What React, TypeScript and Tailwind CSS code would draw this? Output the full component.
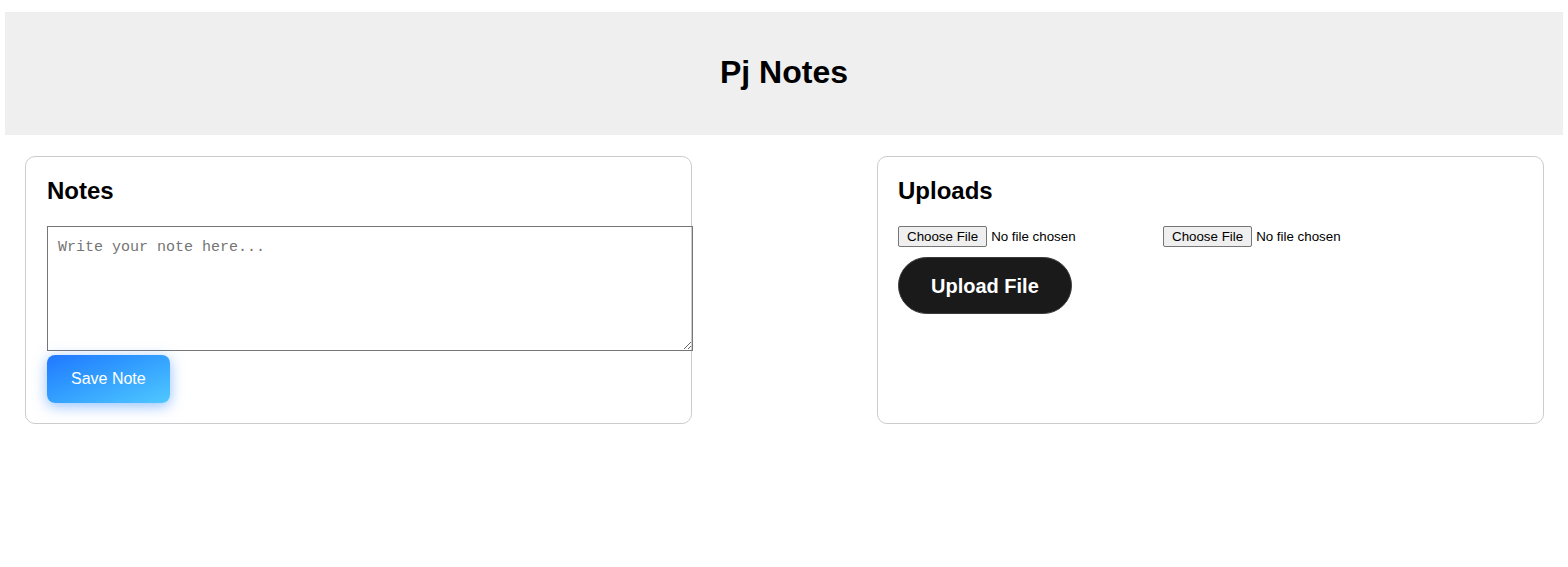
import { useState } from "react";

const App = () => {
  const [note, setNote] = useState("");

  return (
    <main className="min-h-screen bg-white pt-[12px] font-['Liberation_Sans',Arial,sans-serif] text-black">
      <header className="mx-[5px] flex h-[123px] justify-center bg-[#efefef] pt-[41px]">
        <h1 className="text-[32px] font-bold leading-[38px]">Pj Notes</h1>
      </header>

      <div className="ml-[5px] mr-[4px] mt-[21px] flex justify-between px-[20px]">
        {/* notes card */}
        <section className="w-[667px] rounded-[10px] border border-[#cccccc] py-[20px] pl-[21px] pr-[20px]">
          <h2 className="text-[24px] font-bold leading-[28px] mb-[21px]">Notes</h2>
          <textarea
            value={note}
            onChange={(e) => setNote(e.target.value)}
            placeholder="Write your note here..."
            className="box-content block h-[103px] w-full border border-[#767676] p-[10px] font-['Liberation_Mono',monospace] text-[15px] leading-[21px] placeholder:text-[#757575]"
          />
          <button className="mt-[4px] h-[48px] rounded-[8px] bg-gradient-to-br from-[#2277ff] to-[#50c8ff] px-[24px] text-[16px] text-white shadow-[0_3px_14px_rgba(40,130,255,0.5)]">
            Save Note
          </button>
        </section>

        {/* uploads card */}
        <section className="w-[667px] rounded-[10px] border border-[#cccccc] p-[20px]">
          <h2 className="text-[24px] font-bold leading-[28px] mb-[21px]">Uploads</h2>
          <div className="flex items-center text-[13.33px] leading-[15px]">
            <input
              type="file"
              className="w-[265px] file:mr-[4px] file:rounded-[2px] file:border file:border-[#767676] file:bg-[#efefef] file:px-[8px] file:py-[2px] file:text-black"
            />
            <input
              type="file"
              className="w-[250px] file:mr-[4px] file:rounded-[2px] file:border file:border-[#767676] file:bg-[#efefef] file:px-[8px] file:py-[2px] file:text-black"
            />
          </div>
          <button className="mt-[10px] h-[57px] rounded-full border border-[#3a3a3a] bg-[#1a1a1a] px-[32px] text-[20px] font-bold text-white">
            Upload File
          </button>
        </section>
      </div>
    </main>
  );
};

export default App;
